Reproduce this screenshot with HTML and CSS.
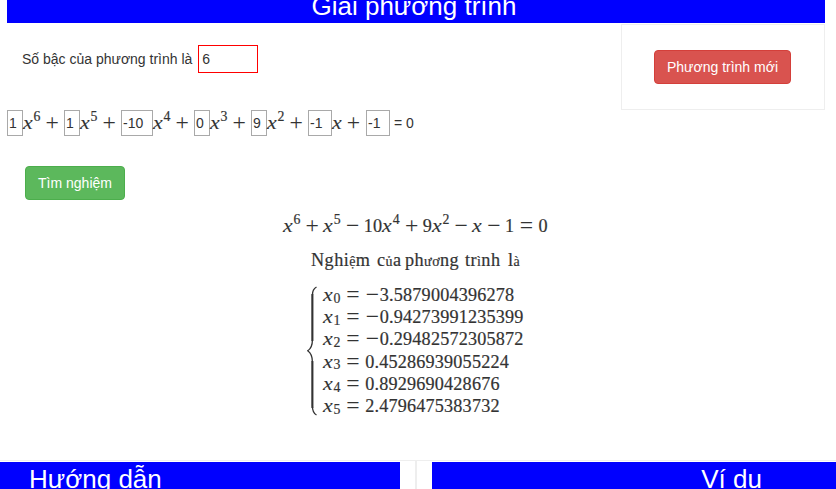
FILE: index.html
```html
<!DOCTYPE html>
<html lang="vi">
<head>
<meta charset="utf-8">
<title>Giải phương trình</title>
<link rel="stylesheet" href="styles.css">
</head>
<body>
<header class="banner"><h1 class="title">Giải phương trình</h1></header>
<section class="top">
  <form class="degree"><label for="deg">Số bậc của phương trình là</label><input id="deg" class="deg-input" value="6"></form>
  <aside class="panel"><button class="btn btn-danger">Phương trình mới</button></aside>
</section>
<form class="coeffs">
  <input class="co" value="1"><span class="math term"><i>x</i><sup>6</sup><b>+</b></span>
  <input class="co" value="1"><span class="math term"><i>x</i><sup>5</sup><b>+</b></span>
  <input class="co wide" value="-10"><span class="math term"><i>x</i><sup>4</sup><b>+</b></span>
  <input class="co" value="0"><span class="math term"><i>x</i><sup>3</sup><b>+</b></span>
  <input class="co" value="9"><span class="math term"><i>x</i><sup>2</sup><b>+</b></span>
  <input class="co mid" value="-1"><span class="math term linear"><i>x</i><b>+</b></span>
  <input class="co mid" value="-1"><span class="equals">= 0</span>
</form>
<div class="actions"><button class="btn btn-success">Tìm nghiệm</button></div>
<main class="result">
  <p class="math equation"><i>x</i><sup>6</sup><b>+</b><i>x</i><sup>5</sup><b>−</b>10<i>x</i><sup>4</sup><b>+</b>9<i>x</i><sup>2</sup><b>−</b><i>x</i><b>−</b>1<b class="rel">=</b>0</p>
  <p class="math caption"><span class="w1">Nghi<small>ệ</small>m</span><span class="w2">c<small>ủ</small>a</span><span class="w3">ph<small>ươ</small>ng</span><span class="w4">tr<small>ì</small>nh</span><span class="w5">l<small>à</small></span></p>
  <div class="system">
    <svg class="brace" width="10" height="130" viewBox="0 0 10 130"><path d="M9.5 1C6.2 2.8 5.4 5 5.4 9V54C5.4 60 4 62.7.7 64.8C4 67 5.4 70 5.4 76V120C5.4 125 6.2 127.2 9.5 129"/><path class="stem" d="M5.4 8V55M5.4 75V122"/></svg>
    <ol class="roots math">
      <li><i>x</i><sub>0</sub><b class="rel">=</b><b class="neg">−</b>3.5879004396278</li>
      <li><i>x</i><sub>1</sub><b class="rel">=</b><b class="neg">−</b>0.94273991235399</li>
      <li><i>x</i><sub>2</sub><b class="rel">=</b><b class="neg">−</b>0.29482572305872</li>
      <li><i>x</i><sub>3</sub><b class="rel">=</b>0.45286939055224</li>
      <li><i>x</i><sub>4</sub><b class="rel">=</b>0.8929690428676</li>
      <li><i>x</i><sub>5</sub><b class="rel">=</b>2.4796475383732</li>
    </ol>
  </div>
</main>
<footer class="bottom">
  <section class="half guide"><h2 class="title">Hướng dẫn</h2></section>
  <section class="half example"><h2 class="title">Ví dụ</h2></section>
</footer>
</body>
</html>
```
FILE: styles.css
```css
* { box-sizing: border-box; }
body { margin: 0; height: 489px; overflow: hidden; background: #fff; color: #333; font: 14px/20px "Liberation Sans", Arial, sans-serif; }
h1, h2, p, ol { margin: 0; padding: 0; }
input { font: inherit; color: inherit; background: #fff; border-radius: 0; outline: 0; margin: 0; }
.title { font-size: 26px; font-weight: 400; line-height: 30px; color: #fff; white-space: nowrap; }
.banner { height: 23px; margin: 0 11px 0 7px; background: #00f; overflow: hidden; display: flex; align-items: flex-end; justify-content: center; }
.banner .title { margin-left: -4px; margin-bottom: 2px; }
.top { display: flex; justify-content: space-between; height: 87px; padding: 1px 11px 0 22px; }
.degree { display: flex; align-items: center; gap: 6px; height: 28px; margin-top: 21px; }
.deg-input { width: 60px; height: 28px; border: 1px solid #f00; padding: 1px 3px; }
.panel { width: 204px; height: 86px; border: 1px solid #eee; padding: 25px 0 0 32px; }
.btn { display: block; height: 34px; padding: 6px 12px; border: 1px solid; border-radius: 4px; font: inherit; color: #fff; white-space: nowrap; }
.btn-danger { background: #d9534f; border-color: #d43f3a; width: 137px; }
.btn-success { background: #5cb85c; border-color: #4cae4c; width: 100px; }
.coeffs { display: flex; align-items: center; height: 26px; padding-left: 7px; }
.co { width: 16px; height: 26px; border: 1px solid #a9a9a9; padding: 1px; flex: none; }
.co.wide { width: 32px; }
.co.mid { width: 24px; }
.term { width: 41px; flex: none; }
.linear { width: 34px; }
.equals { margin-left: 4px; }
.actions { height: 64px; padding: 30px 0 0 25px; }
.math { font-family: "Liberation Serif", "Times New Roman", serif; font-size: 18.2px; line-height: 22px; white-space: nowrap; letter-spacing: .18px; -webkit-text-stroke: .2px #333; }
.math i, .math b, .math sup, .math sub { display: inline-block; font-weight: 400; letter-spacing: 0; line-height: 1; }
.math i { width: .572em; transform: scaleX(1.2); transform-origin: left; -webkit-text-stroke: .1px #333; }
.math b { width: .94em; font-size: 1.3em; text-align: center; line-height: .5; transform: translateY(.06em); -webkit-text-stroke: 0; }
.math b.rel { width: 1.026em; }
.math b.neg { width: .62em; }
.math sup { width: .56em; font-size: .76em; vertical-align: .58em; line-height: 0; }
.math sub { width: .54em; font-size: .76em; vertical-align: -.14em; line-height: 0; }
.result { height: 260px; }
.equation { padding: 15px 0 0 283px; }
.caption { display: flex; padding: 12px 0 0 311px; gap: 6px; }
.caption small { font-size: 14px; }
.caption span { letter-spacing: .45px; }
.w1 { width: 60px; } .w2 { width: 22px; } .w3 { width: 54px; } .w4 { width: 37px; }
.system { display: flex; padding: 13px 0 0 307px; gap: 6px; }
.brace { flex: none; fill: none; stroke: #333; stroke-width: 1.3; }
.brace .stem { stroke-width: 2; }
.roots { list-style: none; margin-top: -2px; }
.roots li { height: 22.2px; }
.bottom { display: flex; height: 29px; border-top: 1px solid #eee; }
.half { height: 29px; overflow: hidden; flex: none; }
.half .title { background: #00f; height: 28px; margin-top: 1px; line-height: 34px; }
.guide { width: 417px; border-right: 2px solid #eee; padding-right: 15px; }
.guide .title { padding-left: 29px; }
.example { width: 419px; padding-left: 15px; }
.example .title { text-align: right; padding-right: 74px; }
```
